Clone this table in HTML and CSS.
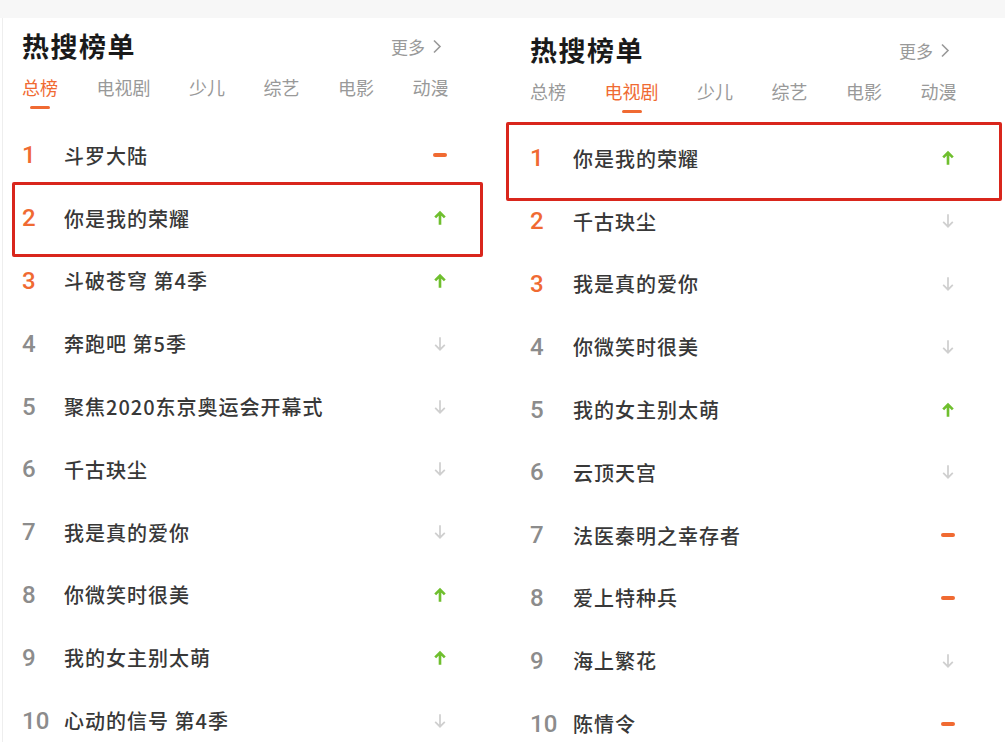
FILE: index.html
```html
<!DOCTYPE html>
<html lang="zh-CN">
<head>
    <meta charset="UTF-8">
    <meta name="viewport" content="width=device-width, initial-scale=1.0">
    <title>热搜榜单</title>
    <link rel="stylesheet" href="styles.css">
</head>
<body>
    <div class="boards">
        <section class="board board-left">
            <div class="board-head">
                <h2 class="board-title">热搜榜单</h2>
                <a class="more">更多<svg width="10" height="15" viewBox="0 0 10 15"><path d="M2 1.5l6 6-6 6" fill="none" stroke="#999" stroke-width="1.6"/></svg></a>
            </div>
            <ul class="tabs">
                <li class="tab active">总榜</li>
                <li class="tab">电视剧</li>
                <li class="tab">少儿</li>
                <li class="tab">综艺</li>
                <li class="tab">电影</li>
                <li class="tab">动漫</li>
            </ul>
            <ol class="rank-list">
                <li class="rank-item top"><span class="rank-num">1</span><span class="rank-name">斗罗大陆</span><span class="trend"><i class="flat"></i></span></li>
                <li class="rank-item top marked"><span class="rank-num">2</span><span class="rank-name">你是我的荣耀</span><span class="trend"><svg class="up" viewBox="0 0 12 14"><path d="M6 13V2.5M1.8 6.5L6 2.3l4.2 4.2"/></svg></span></li>
                <li class="rank-item top"><span class="rank-num">3</span><span class="rank-name">斗破苍穹 第4季</span><span class="trend"><svg class="up" viewBox="0 0 12 14"><path d="M6 13V2.5M1.8 6.5L6 2.3l4.2 4.2"/></svg></span></li>
                <li class="rank-item"><span class="rank-num">4</span><span class="rank-name">奔跑吧 第5季</span><span class="trend"><svg class="down" viewBox="0 0 12 14"><path d="M6 1v11M1.8 7.8L6 12l4.2-4.2"/></svg></span></li>
                <li class="rank-item"><span class="rank-num">5</span><span class="rank-name">聚焦2020东京奥运会开幕式</span><span class="trend"><svg class="down" viewBox="0 0 12 14"><path d="M6 1v11M1.8 7.8L6 12l4.2-4.2"/></svg></span></li>
                <li class="rank-item"><span class="rank-num">6</span><span class="rank-name">千古玦尘</span><span class="trend"><svg class="down" viewBox="0 0 12 14"><path d="M6 1v11M1.8 7.8L6 12l4.2-4.2"/></svg></span></li>
                <li class="rank-item"><span class="rank-num">7</span><span class="rank-name">我是真的爱你</span><span class="trend"><svg class="down" viewBox="0 0 12 14"><path d="M6 1v11M1.8 7.8L6 12l4.2-4.2"/></svg></span></li>
                <li class="rank-item"><span class="rank-num">8</span><span class="rank-name">你微笑时很美</span><span class="trend"><svg class="up" viewBox="0 0 12 14"><path d="M6 13V2.5M1.8 6.5L6 2.3l4.2 4.2"/></svg></span></li>
                <li class="rank-item"><span class="rank-num">9</span><span class="rank-name">我的女主别太萌</span><span class="trend"><svg class="up" viewBox="0 0 12 14"><path d="M6 13V2.5M1.8 6.5L6 2.3l4.2 4.2"/></svg></span></li>
                <li class="rank-item"><span class="rank-num">10</span><span class="rank-name">心动的信号 第4季</span><span class="trend"><svg class="down" viewBox="0 0 12 14"><path d="M6 1v11M1.8 7.8L6 12l4.2-4.2"/></svg></span></li>
            </ol>
        </section>

        <section class="board board-right">
            <div class="board-head">
                <h2 class="board-title">热搜榜单</h2>
                <a class="more">更多<svg width="10" height="15" viewBox="0 0 10 15"><path d="M2 1.5l6 6-6 6" fill="none" stroke="#999" stroke-width="1.6"/></svg></a>
            </div>
            <ul class="tabs">
                <li class="tab">总榜</li>
                <li class="tab active">电视剧</li>
                <li class="tab">少儿</li>
                <li class="tab">综艺</li>
                <li class="tab">电影</li>
                <li class="tab">动漫</li>
            </ul>
            <ol class="rank-list">
                <li class="rank-item top marked"><span class="rank-num">1</span><span class="rank-name">你是我的荣耀</span><span class="trend"><svg class="up" viewBox="0 0 12 14"><path d="M6 13V2.5M1.8 6.5L6 2.3l4.2 4.2"/></svg></span></li>
                <li class="rank-item top"><span class="rank-num">2</span><span class="rank-name">千古玦尘</span><span class="trend"><svg class="down" viewBox="0 0 12 14"><path d="M6 1v11M1.8 7.8L6 12l4.2-4.2"/></svg></span></li>
                <li class="rank-item top"><span class="rank-num">3</span><span class="rank-name">我是真的爱你</span><span class="trend"><svg class="down" viewBox="0 0 12 14"><path d="M6 1v11M1.8 7.8L6 12l4.2-4.2"/></svg></span></li>
                <li class="rank-item"><span class="rank-num">4</span><span class="rank-name">你微笑时很美</span><span class="trend"><svg class="down" viewBox="0 0 12 14"><path d="M6 1v11M1.8 7.8L6 12l4.2-4.2"/></svg></span></li>
                <li class="rank-item"><span class="rank-num">5</span><span class="rank-name">我的女主别太萌</span><span class="trend"><svg class="up" viewBox="0 0 12 14"><path d="M6 13V2.5M1.8 6.5L6 2.3l4.2 4.2"/></svg></span></li>
                <li class="rank-item"><span class="rank-num">6</span><span class="rank-name">云顶天宫</span><span class="trend"><svg class="down" viewBox="0 0 12 14"><path d="M6 1v11M1.8 7.8L6 12l4.2-4.2"/></svg></span></li>
                <li class="rank-item"><span class="rank-num">7</span><span class="rank-name">法医秦明之幸存者</span><span class="trend"><i class="flat"></i></span></li>
                <li class="rank-item"><span class="rank-num">8</span><span class="rank-name">爱上特种兵</span><span class="trend"><i class="flat"></i></span></li>
                <li class="rank-item"><span class="rank-num">9</span><span class="rank-name">海上繁花</span><span class="trend"><svg class="down" viewBox="0 0 12 14"><path d="M6 1v11M1.8 7.8L6 12l4.2-4.2"/></svg></span></li>
                <li class="rank-item"><span class="rank-num">10</span><span class="rank-name">陈情令</span><span class="trend"><i class="flat"></i></span></li>
            </ol>
        </section>
    </div>
</body>
</html>
```

FILE: styles.css
```css
body {
    margin: 0;
    background-color: #f7f7f7;
    font-family: "Noto Sans CJK SC", "Noto Sans", sans-serif;
    color: #333;
}

.boards {
    display: flex;
    margin-top: 18px;
    height: calc(100vh - 18px);
    background-color: #fff;
    overflow: hidden;
}

.board {
    width: 508px;
    flex-shrink: 0;
    box-sizing: border-box;
    padding: 12px 60px 0 22px;
}

.board-left {
    border-left: 1px solid #eee;
    margin-left: 2px;
    padding-left: 19px;
    width: 506px;
}

.board-right {
    padding-top: 16px;
}

.board-head {
    display: flex;
    justify-content: space-between;
    align-items: center;
    height: 32px;
}

.board-title {
    margin: 0;
    font-size: 27px;
    line-height: 32px;
    font-weight: 700;
    letter-spacing: 1.5px;
    color: #1a1a1a;
}

.more {
    display: flex;
    align-items: center;
    gap: 7px;
    margin-right: 6px;
    font-size: 17px;
    color: #999;
    cursor: pointer;
}

.tabs {
    display: flex;
    gap: 38.5px;
    list-style: none;
    margin: 12px 0 0;
    padding: 0;
}

.tab {
    position: relative;
    flex-shrink: 0;
    white-space: nowrap;
    padding-bottom: 9px;
    font-size: 18px;
    line-height: 26px;
    color: #999;
    cursor: pointer;
}

.tab.active {
    color: #f06a32;
}

.tab.active::after {
    content: "";
    position: absolute;
    left: 50%;
    bottom: 0;
    width: 20px;
    height: 3px;
    margin-left: -10px;
    border-radius: 2px;
    background-color: #f06a32;
}

.rank-list {
    list-style: none;
    margin: 15px 0 0;
    padding: 0;
}

.board-right .rank-list {
    margin-top: 14px;
}

.rank-item {
    position: relative;
    display: flex;
    align-items: center;
    height: 62.8px;
}

.rank-num {
    width: 42px;
    flex-shrink: 0;
    font-family: Roboto, "Liberation Sans", sans-serif;
    font-size: 24px;
    font-weight: 500;
    color: #8c8c8c;
}

.board-right .rank-num {
    width: 43px;
}

.rank-item.top .rank-num {
    color: #f06a32;
}

.rank-name {
    flex: 1;
    font-size: 20px;
    font-weight: 500;
    letter-spacing: 1px;
    color: #383838;
}

.trend {
    width: 16px;
    display: flex;
    justify-content: center;
    align-items: center;
}

.trend svg {
    width: 14px;
    height: 16px;
    fill: none;
}

.trend .up {
    stroke: #6fbf2e;
    stroke-width: 2.3;
}

.trend .down {
    stroke: #cfcfcf;
    stroke-width: 1.5;
}

.trend .flat {
    display: block;
    width: 14px;
    height: 4px;
    border-radius: 2px;
    background-color: #f06a32;
}

/* red highlight boxes */
.rank-item.marked::after {
    content: "";
    position: absolute;
    top: -5px;
    bottom: -7px;
    left: -10px;
    right: -35px;
    border: 3px solid #d9261c;
    border-radius: 2px;
}

.board-right .rank-item.marked::after {
    top: -5px;
    bottom: -11px;
    left: -24px;
    right: -46px;
}
```
